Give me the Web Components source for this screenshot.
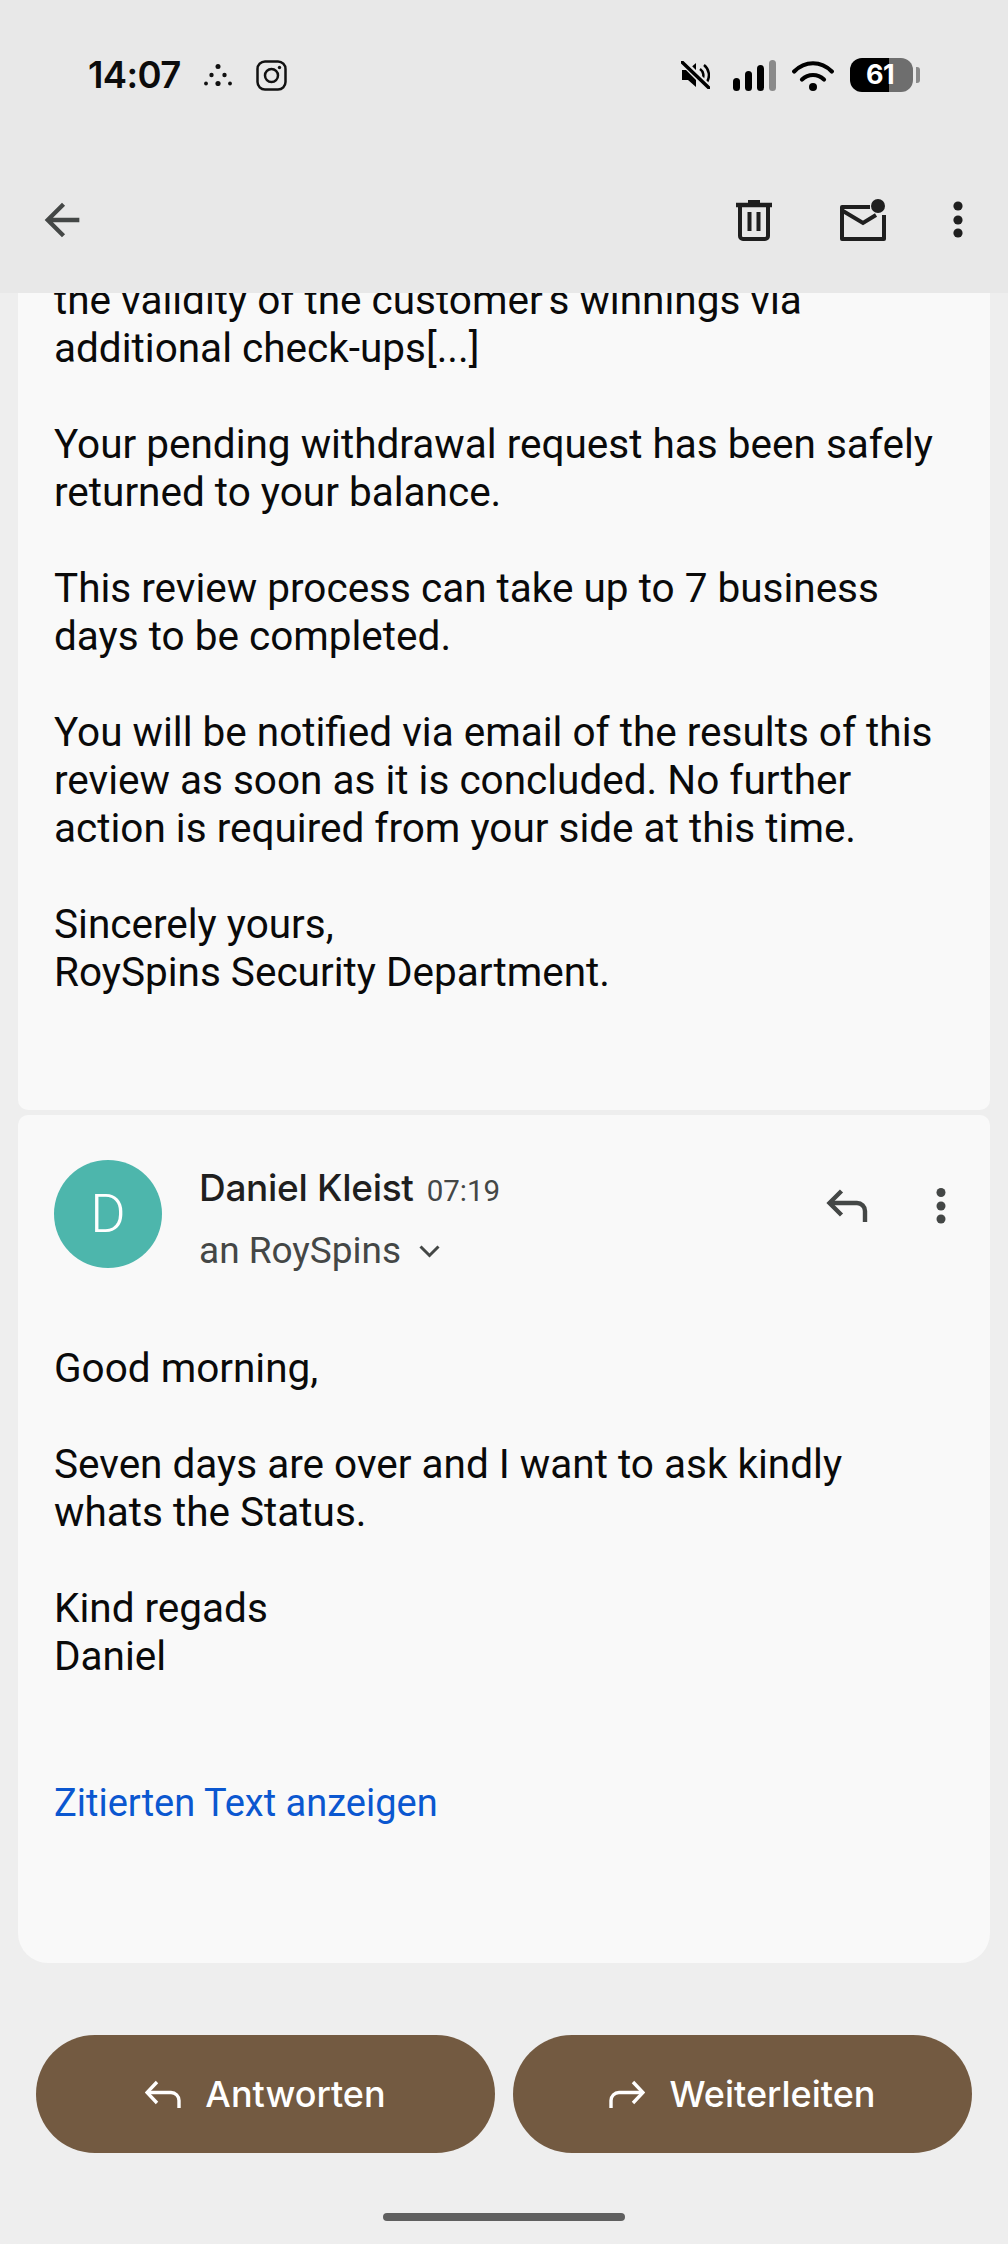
<!DOCTYPE html>
<html lang="de"><head><meta charset="utf-8"><title>Mail</title>
<style>
html,body{margin:0;padding:0;background:#eeeeee}
body{font-family:Roboto,"Liberation Sans",sans-serif}
</style></head><body>
<mail-screen>
  <app-header slot="header"></app-header>
  <mail-card slot="cards" variant="first">
    <p>the validity of the customer's winnings via<br>additional check-ups[...]</p>
    <p>Your pending withdrawal request has been safely<br>returned to your balance.</p>
    <p>This review process can take up to 7 business<br>days to be completed.</p>
    <p>You will be notified via email of the results of this<br>review as soon as it is concluded. No further<br>action is required from your side at this time.</p>
    <p>Sincerely yours,<br>RoySpins Security Department.</p>
  </mail-card>
  <mail-card slot="cards" variant="last">
    <sender-row slot="head" name="Daniel Kleist" time="07:19" to="an RoySpins" initial="D"></sender-row>
    <p>Good morning,</p>
    <p>Seven days are over and I want to ask kindly<br>whats the Status.</p>
    <p>Kind regads<br>Daniel</p>
    <quote-link>Zitierten Text anzeigen</quote-link>
  </mail-card>
  <action-bar slot="footer"></action-bar>
</mail-screen>
<script>
function def(name, html){
  customElements.define(name, class extends HTMLElement{
    constructor(){super();const r=this.attachShadow({mode:'open'});r.innerHTML=typeof html==='function'?html(this):html;}
    connectedCallback(){ if(typeof html==='function') this.shadowRoot.innerHTML=html(this); }
  });
}
def('mail-screen',`<style>
:host{display:flex;flex-direction:column;width:1008px;height:2244px;overflow:hidden;background:#eee}
.cards{flex:1;min-height:0;overflow:hidden;display:flex;flex-direction:column;justify-content:flex-end;gap:5px;padding:0 18px}
</style><slot name="header"></slot><div class="cards"><slot name="cards"></slot></div><slot name="footer"></slot>`);

def('app-header',`<style>
:host{display:block;background:#e8e8e8;height:293px;flex:none;position:relative;z-index:1;color:#000}
.status{height:150px;display:flex;align-items:center;padding:0 88px;box-sizing:border-box;width:100%}
.time{font:600 36.500px/1 Inter,Roboto,sans-serif;letter-spacing:-.6px;color:#0c0c0c;width:116px;flex:none;white-space:nowrap}
.status svg{display:block;flex:none}
.left{display:flex;align-items:center}
.right{margin-left:auto;display:flex;align-items:center}
.batt{width:63px;height:34px;border-radius:12px;background:linear-gradient(90deg,#000 0 39px,#6e6e6e 39px);color:#fff;font:700 27px/34px Inter,Roboto,sans-serif;text-align:center;flex:none;margin-left:16px;letter-spacing:-.5px;text-indent:-3px}
.nub{width:4px;height:16px;background:#8a8a8a;border-radius:0 3px 3px 0;margin-left:3px;flex:none}
.tool{height:143px;display:flex;align-items:center;padding:0 0 3px 36px;box-sizing:border-box}
.tool svg{display:block;flex:none}
.acts{margin-left:auto;display:flex;align-items:center;padding-right:41px}
</style>
<div class="status">
  <div class="left">
  <span class="time">14:07</span>
  <svg width="28" height="22" viewBox="0 0 28 22" fill="#111"><circle cx="14" cy="2.500" r="2.500"/><circle cx="7.500" cy="11" r="2.200"/><circle cx="20.500" cy="11" r="2.200"/><circle cx="2" cy="19.500" r="1.900"/><circle cx="14" cy="19.500" r="2.600"/><circle cx="26" cy="19.500" r="1.900"/></svg>
  <svg style="margin-left:24px" width="31" height="31" viewBox="0 0 31 31" fill="none" stroke="#111" stroke-width="2.500"><rect x="1.500" y="1.500" width="28" height="28" rx="7.500"/><circle cx="15.500" cy="15.500" r="6.500"/><circle cx="23.500" cy="7.500" r="1.700" fill="#111" stroke="none"/></svg>
  </div>
  <div class="right">
  <svg width="29" height="28" viewBox="0 0 29 28"><path d="M1 9h6l8-7v24l-8-7H1z" fill="#000"/><path d="M19 8a8 8 0 0 1 2 11M23 4a13 13 0 0 1 3 17" fill="none" stroke="#000" stroke-width="2.500"/><path d="M2 1l26 26" stroke="#e8e8e8" stroke-width="7"/><path d="M1 1l27 26" stroke="#000" stroke-width="3.400" stroke-linecap="round"/></svg>
  <svg style="margin-left:23px" width="43" height="31" viewBox="0 0 43 31"><rect x="0" y="18" width="7" height="13" rx="3.500" fill="#000"/><rect x="12" y="11" width="7" height="20" rx="3.500" fill="#000"/><rect x="24" y="5" width="7" height="26" rx="3.500" fill="#000"/><rect x="36" y="0" width="7" height="31" rx="3.500" fill="#8a8a8a"/></svg>
  <svg style="margin-left:16px" width="42" height="31" viewBox="0 0 42 31" fill="none" stroke="#000" stroke-width="4.200" stroke-linecap="round"><path d="M2.200 11.500C13 .5 29 .5 39.800 11.500"/><path d="M10 19.500c6.500-6 15.500-6 22 0"/><circle cx="21" cy="27" r="4" fill="#000" stroke="none"/></svg>
  <div class="batt">61</div><div class="nub"></div>
  </div>
</div>
<div class="tool">
  <svg width="52" height="52" viewBox="0 0 24 24" fill="#444746"><path d="M20 11H7.830l5.590-5.590L12 4l-8 8 8 8 1.410-1.410L7.830 13H20z"/></svg>
  <div class="acts">
    <svg width="36" height="42" viewBox="0 0 36 42" fill="none" stroke="#1f1f1f" stroke-width="4"><path d="M0 6h36" stroke-width="4.500"/><path d="M12 3h12" stroke-width="4"/><path d="M4 6v31a3 3 0 0 0 3 3h22a3 3 0 0 0 3-3V6"/><path d="M13.500 13v19M22.500 13v19"/></svg>
    <svg style="margin-left:68px" width="46" height="42" viewBox="0 0 46 42" fill="none"><path d="M30 8H2v32h42V16" stroke="#1f1f1f" stroke-width="4" stroke-linejoin="round"/><path d="M3 12l20 12 13-8" stroke="#1f1f1f" stroke-width="4"/><circle cx="38" cy="7" r="7" fill="#1f1f1f"/></svg>
    <svg style="margin-left:63px" width="18" height="40" viewBox="0 0 18 40" fill="#1f1f1f"><circle cx="9" cy="6" r="4.600"/><circle cx="9" cy="20" r="4.600"/><circle cx="9" cy="33" r="4.600"/></svg>
  </div>
</div>`);

def('mail-card',(el)=>`<style>
:host{display:block;flex:none;background:#f9f9f9;
 border-radius:${el.getAttribute('variant')==='first'?'0 0 10px 10px':'10px 10px 30px 30px'};
 padding:0 36px ${el.getAttribute('variant')==='first'?'114':'136'}px;
 font:400 40.500px/48px Roboto,sans-serif;color:#0a0a0a}
::slotted(p){margin:0 0 48px}
::slotted(p:last-of-type){margin-bottom:0}
</style><slot name="head"></slot><slot></slot>`);

def('sender-row',(el)=>`<style>
:host{display:flex;align-items:flex-start;height:229px;box-sizing:border-box;padding-top:45px}
.av{width:108px;height:108px;border-radius:50%;background:#4db6ac;color:#fff;font:300 54px/108px Roboto,sans-serif;text-align:center;flex:none}
.meta{margin-left:37px;display:flex;flex-direction:column;flex:1}
.l1{display:flex;align-items:baseline;height:56px;line-height:56px;white-space:nowrap}
.name{font:500 37px/56px Inter,Roboto,sans-serif;color:#1f1f1f;letter-spacing:-.3px}
.time{font:400 29.500px/56px Roboto,sans-serif;color:#444746;margin-left:13px}
.l2{display:flex;align-items:center;height:40px;margin-top:15px;white-space:nowrap;font:400 37px/40px Roboto,sans-serif;color:#444746}
.l2 svg{margin-left:18px;display:block}
.acts{display:flex;align-items:center;margin-top:28px;padding-right:8px}
svg{flex:none}
</style>
<div class="av">${el.getAttribute('initial')||''}</div>
<div class="meta">
  <div class="l1"><span class="name">${el.getAttribute('name')||''}</span><span class="time">${el.getAttribute('time')||''}</span></div>
  <div class="l2"><span>${el.getAttribute('to')||''}</span><svg width="21" height="13" viewBox="0 0 21 13" fill="none" stroke="#444746" stroke-width="3"><path d="M1.500 1.500l9 9 9-9"/></svg></div>
</div>
<div class="acts">
  <svg width="42" height="34" viewBox="0 0 42 34" fill="none" stroke="#444746" stroke-width="4.400"><path d="M15.500 2L3.500 14l12 12"/><path d="M3.500 14H31a8 8 0 0 1 8 8v11"/></svg>
  <svg style="margin-left:68px" width="10" height="36" viewBox="0 0 10 36" fill="#444746"><circle cx="5" cy="4.500" r="4.500"/><circle cx="5" cy="18" r="4.500"/><circle cx="5" cy="31" r="4.500"/></svg>
</div>`);

def('quote-link',`<style>:host{display:block;margin-top:99px;color:#0b57d0;white-space:nowrap;font-size:38px}</style><slot></slot>`);

def('action-btn',(el)=>`<style>
:host{display:flex;flex:1;align-items:center;justify-content:center;height:118px;border-radius:59px;background:#735a41;color:#fff;font:500 36px/1 Inter,Roboto,sans-serif}
svg{display:block;margin-right:24px;flex:none}
</style>${el.getAttribute('icon')==='fwd'
 ?'<svg width="36" height="28" viewBox="0 0 36 28" fill="none" stroke="#fff" stroke-width="3.400"><path d="M24 2l10 10.500L24 23"/><path d="M33 12.500H10a8 8 0 0 0-8 8V28"/></svg>'
 :'<svg width="36" height="28" viewBox="0 0 36 28" fill="none" stroke="#fff" stroke-width="3.400"><path d="M12 2L2 12.500 12 23"/><path d="M3 12.500h23a8 8 0 0 1 8 8V28"/></svg>'}<span><slot></slot></span>`);

def('action-bar',`<style>
:host{display:block;flex:none;height:281px;box-sizing:border-box;padding-top:72px}
.row{display:flex;gap:18px;padding:0 36px}
.home{width:242px;height:8px;border-radius:4px;background:#5f5f5f;margin:60px auto 0}
</style><div class="row"><action-btn icon="reply">Antworten</action-btn><action-btn icon="fwd">Weiterleiten</action-btn></div><div class="home"></div>`);
</script>
</body></html>
